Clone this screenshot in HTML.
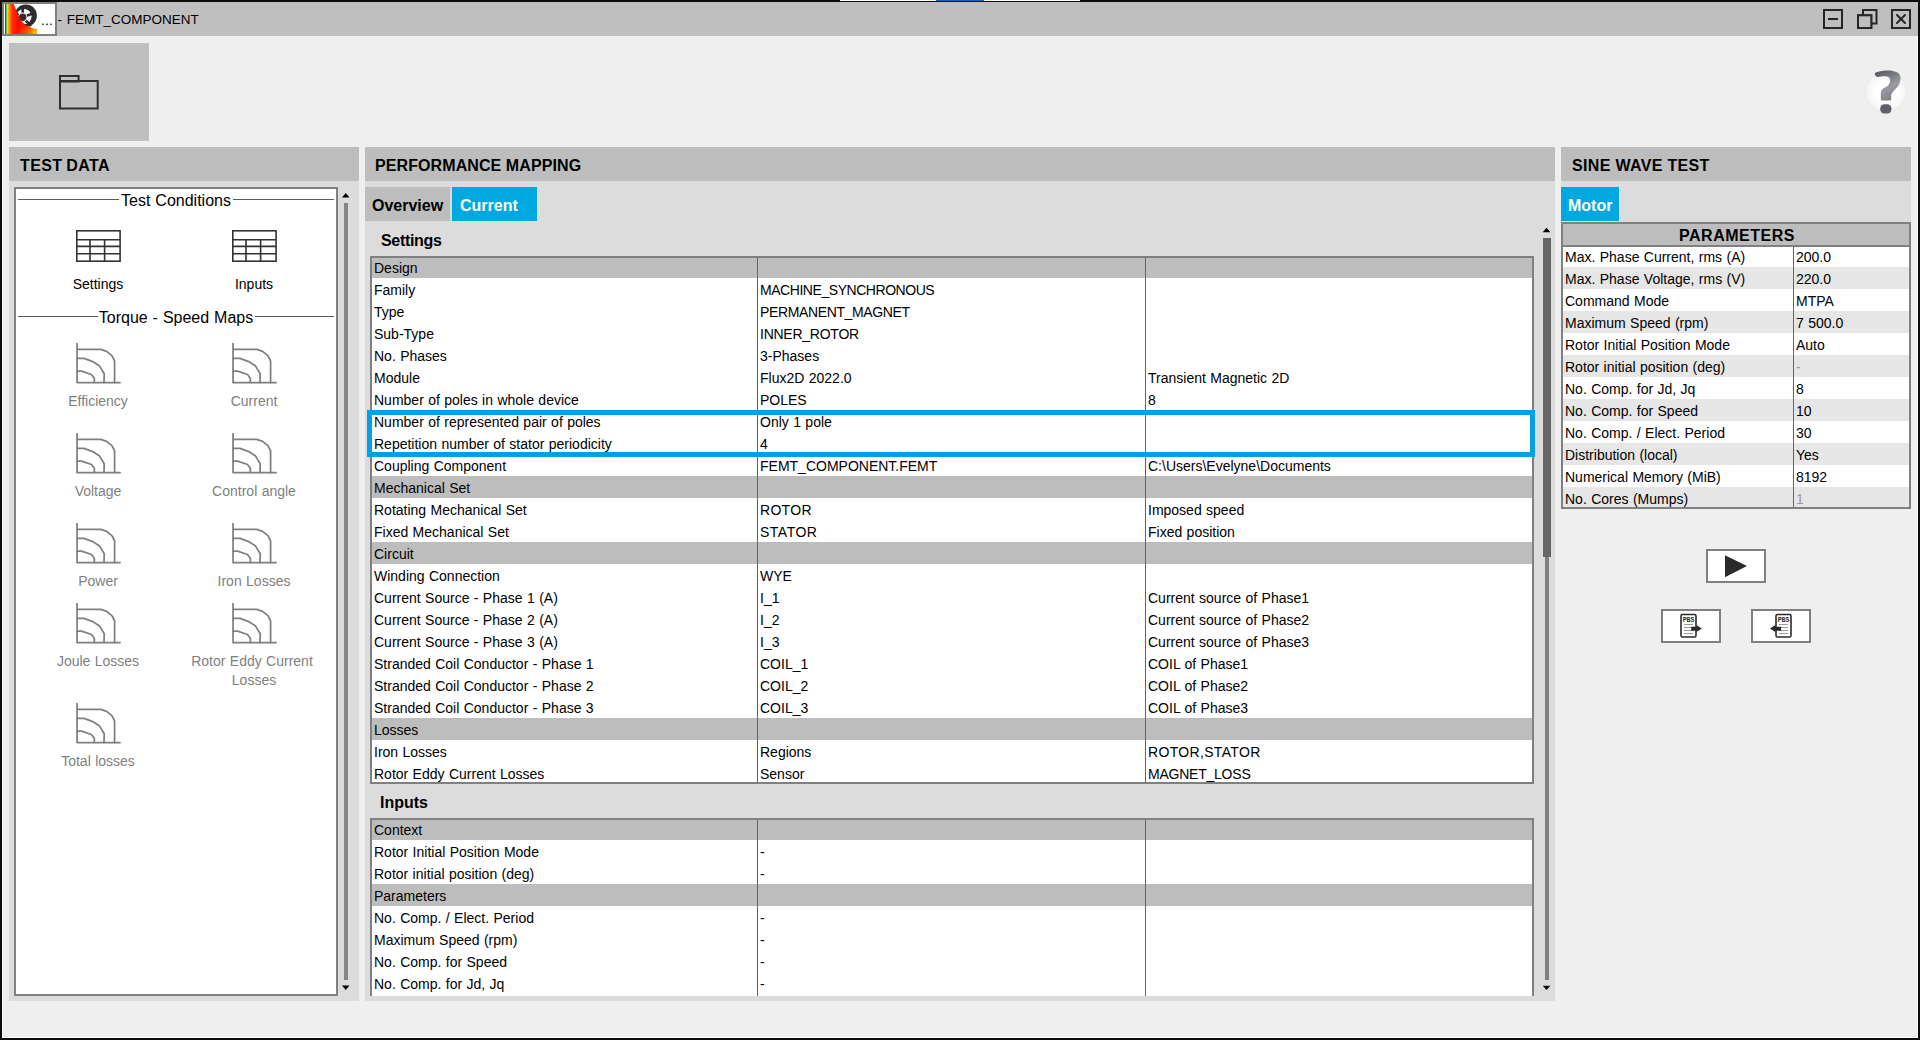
<!DOCTYPE html>
<html><head><meta charset="utf-8"><title>FEMT_COMPONENT</title>
<style>
*{box-sizing:border-box;margin:0;padding:0}
html,body{width:1920px;height:1040px;overflow:hidden}
body{position:relative;background:#efefef;font-family:"Liberation Sans",sans-serif;color:#000;font-size:14px}
.a{position:absolute}
.t{position:absolute;white-space:nowrap;line-height:22px;font-size:14px;word-spacing:0.5px}
.b{word-spacing:0}
.b{font-weight:bold}
.hdr{position:absolute;background:#bdbdbd;height:34px;top:147px}
.body{position:absolute;background:#dcdcdc}
.row{position:absolute;height:22px}
.g{background:#bdbdbd}
.alt{background:#e6e6e6}
.w{background:#fff}
.vl{position:absolute;width:1px;background:#646464}
</style></head>
<body>
<div class="a" style="left:0;top:0;width:1920px;height:2px;background:#0c0c0c"></div><div class="a" style="left:0;top:0;width:2px;height:1040px;background:#0c0c0c"></div><div class="a" style="left:1918px;top:0;width:2px;height:1040px;background:#0c0c0c"></div><div class="a" style="left:0;top:1038px;width:1920px;height:2px;background:#0c0c0c"></div><div class="a" style="left:2px;top:36px;width:1px;height:1002px;background:#fff"></div><div class="a" style="left:1917px;top:36px;width:1px;height:1002px;background:#fff"></div><div class="a" style="left:2px;top:1037px;width:1916px;height:1px;background:#fff"></div><div class="a" style="left:840px;top:0;width:240px;height:1px;background:#fff"></div><div class="a" style="left:936px;top:0;width:48px;height:1px;background:#0a64c8"></div><div class="a" style="left:2px;top:2px;width:1916px;height:34px;background:#bfbfbf"></div><div class="a" style="left:2px;top:2px;width:55px;height:34px;border:2px solid #7f7f7f;background:#fff;overflow:hidden">
<svg width="51" height="30" viewBox="0 0 51 30" style="position:absolute;left:0;top:0">
<defs>
<linearGradient id="fg" gradientUnits="userSpaceOnUse" x1="2" y1="0" x2="33" y2="0">
<stop offset="0" stop-color="#30d060"/><stop offset="0.04" stop-color="#e8f000"/><stop offset="0.1" stop-color="#ff9000"/><stop offset="0.2" stop-color="#ff3000"/><stop offset="0.4" stop-color="#ff0800"/><stop offset="0.75" stop-color="#ff2a00"/><stop offset="1" stop-color="#ff7000"/>
</linearGradient>
<linearGradient id="fb" gradientUnits="userSpaceOnUse" x1="16" y1="22" x2="30" y2="31">
<stop offset="0" stop-color="#ff8000" stop-opacity="0"/><stop offset="0.6" stop-color="#ff9000" stop-opacity="0.5"/><stop offset="1" stop-color="#d8d000" stop-opacity="0.9"/>
</linearGradient>
</defs>
<circle cx="21.8" cy="11.6" r="11.1" fill="#2d2d2d"/>
<circle cx="20" cy="12.6" r="7.6" fill="#fff"/>
<g stroke="#2d2d2d" stroke-width="2.6">
<line x1="18.7" y1="13.3" x2="18.7" y2="2"/><line x1="18.7" y1="13.3" x2="30" y2="9"/><line x1="18.7" y1="13.3" x2="27" y2="22"/><line x1="18.7" y1="13.3" x2="14" y2="22"/><line x1="18.7" y1="13.3" x2="9" y2="8"/>
</g>
<circle cx="18.7" cy="13.3" r="4.7" fill="#fff"/>
<circle cx="18.7" cy="13.3" r="3.7" fill="#2d2d2d"/>
<path d="M1,0 L9.8,0 C11.5,4 13.5,10.5 16,15 C18.5,19.5 23,22.5 29,24.5 L32.8,25.1 L32.8,30 L1,30 Z" fill="url(#fg)"/>
<path d="M14,20 C18,22.5 24,24.8 32.8,25.1 L32.8,30 L10,30 Z" fill="url(#fb)"/>
<rect x="1.1" y="0" width="1.1" height="30" fill="#0a58c8"/>
<rect x="37.9" y="19.6" width="1.9" height="1.5" fill="#6a5030"/><rect x="41.9" y="19.6" width="2.1" height="1.5" fill="#4a4a60"/><rect x="46" y="19.6" width="1.9" height="1.5" fill="#6a5030"/>
</svg></div><div class="t" style="left:57.5px;top:9px;font-size:13.5px;line-height:22px;word-spacing:1px">- FEMT_COMPONENT</div><svg class="a" style="left:1820px;top:6px" width="96" height="26" viewBox="0 0 96 26">
<g fill="none" stroke="#262626" stroke-width="2">
<rect x="4" y="4" width="18" height="18"/>
<rect x="43" y="4" width="13.5" height="13.5"/>
<rect x="38" y="9.3" width="13.3" height="12.7"/>
<rect x="72" y="4" width="18" height="18"/>
</g>
<rect x="38" y="9.3" width="13.3" height="12.7" fill="#bfbfbf" stroke="#262626" stroke-width="2"/>
<rect x="8" y="12" width="10" height="2" fill="#262626"/>
<g stroke="#262626" stroke-width="2" stroke-linecap="round"><line x1="77" y1="9" x2="85" y2="17"/><line x1="85" y1="9" x2="77" y2="17"/></g>
</svg><div class="a" style="left:9px;top:43px;width:140px;height:98px;background:#bfbfbf"></div>
<svg class="a" style="left:55px;top:70px" width="50" height="45" viewBox="0 0 50 45">
<g fill="none" stroke="#2f2f2f" stroke-width="2">
<rect x="5" y="6" width="18.6" height="5.5"/>
<rect x="5" y="11" width="37.7" height="27.5"/>
</g></svg><svg class="a" style="left:1840px;top:50px" width="80" height="80" viewBox="0 0 80 80">
<defs><radialGradient id="hg" cx="0.5" cy="0.5" r="0.5"><stop offset="0.5" stop-color="#fff"/><stop offset="0.85" stop-color="#f6f6f6"/><stop offset="1" stop-color="#e9e9e9"/></radialGradient>
<linearGradient id="qg" x1="0.3" y1="0" x2="0.7" y2="1"><stop offset="0" stop-color="#5b5e66"/><stop offset="0.55" stop-color="#9a9ba0"/><stop offset="1" stop-color="#7d7f85"/></linearGradient></defs>
<circle cx="46" cy="41.5" r="21.5" fill="url(#hg)"/>
<path d="M35.2,22.8 C40,20 52,19.3 57.5,22.5 C61.5,25 61.3,31 58.5,35.5 C56,39 52,41.5 51.2,45.5 L51.2,49.2 C51.2,50 50.8,50.6 50,50.6 L42,50.6 C41.2,50.6 40.8,50 40.8,49.2 L40.8,42.5 C40.8,40 42.5,38.6 45.5,37.2 C48.5,35.6 50.2,33.5 50.2,30.5 C50.2,27.5 47.5,26.3 44.5,26.3 C41.5,26.3 39,27.2 37.2,26.9 C35.3,26.5 34.2,24 35.2,22.8 Z" fill="url(#qg)"/>
<rect x="40.2" y="54.3" width="11.3" height="9.2" rx="4.2" fill="#5f6168"/>
</svg><div class="hdr" style="left:9px;width:350px"></div><div class="t b" style="left:20px;top:155px;font-size:16px;letter-spacing:0.4px;word-spacing:-1px">TEST DATA</div><div class="body" style="left:9px;top:181px;width:350px;height:820px"></div><div class="a" style="left:14px;top:187px;width:324px;height:809px;border:2px solid #808080;background:#fff"></div><svg class="a" style="left:340px;top:190px" width="12" height="803" viewBox="0 0 12 803"><path d="M2,7.5 L9.5,7.5 L5.75,3 Z" fill="#000"/><rect x="4" y="13" width="4" height="777" fill="#858585"/><path d="M2,795.5 L9.5,795.5 L5.75,800 Z" fill="#000"/></svg><div class="t" style="left:14px;top:190px;width:324px;text-align:center;font-size:16px">Test Conditions</div><div class="a" style="left:18px;top:199px;width:101px;height:1px;background:#5a5a5a"></div><div class="a" style="left:233px;top:199px;width:101px;height:1px;background:#5a5a5a"></div><div class="t" style="left:14px;top:307px;width:324px;text-align:center;font-size:16px">Torque - Speed Maps</div><div class="a" style="left:18px;top:316px;width:80px;height:1px;background:#5a5a5a"></div><div class="a" style="left:255px;top:316px;width:79px;height:1px;background:#5a5a5a"></div><svg class="a" style="left:76px;top:230px" width="46" height="33" viewBox="0 0 46 33">
<g fill="none" stroke="#333" stroke-width="1.6">
<rect x="0.8" y="0.8" width="43.3" height="30.4"/>
<line x1="0.8" y1="9.7" x2="44.1" y2="9.7"/><line x1="0.8" y1="16.4" x2="44.1" y2="16.4"/><line x1="0.8" y1="23.7" x2="44.1" y2="23.7"/>
<line x1="14" y1="9.7" x2="14" y2="31.2"/><line x1="28.6" y1="9.7" x2="28.6" y2="31.2"/>
</g></svg><svg class="a" style="left:232px;top:230px" width="46" height="33" viewBox="0 0 46 33">
<g fill="none" stroke="#333" stroke-width="1.6">
<rect x="0.8" y="0.8" width="43.3" height="30.4"/>
<line x1="0.8" y1="9.7" x2="44.1" y2="9.7"/><line x1="0.8" y1="16.4" x2="44.1" y2="16.4"/><line x1="0.8" y1="23.7" x2="44.1" y2="23.7"/>
<line x1="14" y1="9.7" x2="14" y2="31.2"/><line x1="28.6" y1="9.7" x2="28.6" y2="31.2"/>
</g></svg><div class="t" style="left:18px;top:273px;width:160px;text-align:center">Settings</div><div class="t" style="left:174px;top:273px;width:160px;text-align:center">Inputs</div><svg class="a" style="left:76px;top:343px" width="46" height="42" viewBox="0 0 46 42">
<g fill="none" stroke="#808080" stroke-width="1.75" stroke-linejoin="round" stroke-linecap="round">
<path d="M1.05,0.5 L1.05,39.5 L44.1,39.5"/>
<path d="M1.05,6.3 L24.8,6.3 L30.6,8.3 L35.9,12.7 L38.6,18 L38.6,39.5"/>
<path d="M1.05,15.4 L8,15.4 L16.7,18.6 L23.6,23.1 L28.2,30.8 L28,39.5"/>
<path d="M1.05,28.2 L5.6,28.2 L15.5,31.5 L18.4,35.6 L18.3,39.5"/>
</g></svg><div class="t" style="left:18px;top:390px;width:160px;text-align:center;color:#7f7f7f">Efficiency</div><svg class="a" style="left:232px;top:343px" width="46" height="42" viewBox="0 0 46 42">
<g fill="none" stroke="#808080" stroke-width="1.75" stroke-linejoin="round" stroke-linecap="round">
<path d="M1.05,0.5 L1.05,39.5 L44.1,39.5"/>
<path d="M1.05,6.3 L24.8,6.3 L30.6,8.3 L35.9,12.7 L38.6,18 L38.6,39.5"/>
<path d="M1.05,15.4 L8,15.4 L16.7,18.6 L23.6,23.1 L28.2,30.8 L28,39.5"/>
<path d="M1.05,28.2 L5.6,28.2 L15.5,31.5 L18.4,35.6 L18.3,39.5"/>
</g></svg><div class="t" style="left:174px;top:390px;width:160px;text-align:center;color:#7f7f7f">Current</div><svg class="a" style="left:76px;top:433px" width="46" height="42" viewBox="0 0 46 42">
<g fill="none" stroke="#808080" stroke-width="1.75" stroke-linejoin="round" stroke-linecap="round">
<path d="M1.05,0.5 L1.05,39.5 L44.1,39.5"/>
<path d="M1.05,6.3 L24.8,6.3 L30.6,8.3 L35.9,12.7 L38.6,18 L38.6,39.5"/>
<path d="M1.05,15.4 L8,15.4 L16.7,18.6 L23.6,23.1 L28.2,30.8 L28,39.5"/>
<path d="M1.05,28.2 L5.6,28.2 L15.5,31.5 L18.4,35.6 L18.3,39.5"/>
</g></svg><div class="t" style="left:18px;top:480px;width:160px;text-align:center;color:#7f7f7f">Voltage</div><svg class="a" style="left:232px;top:433px" width="46" height="42" viewBox="0 0 46 42">
<g fill="none" stroke="#808080" stroke-width="1.75" stroke-linejoin="round" stroke-linecap="round">
<path d="M1.05,0.5 L1.05,39.5 L44.1,39.5"/>
<path d="M1.05,6.3 L24.8,6.3 L30.6,8.3 L35.9,12.7 L38.6,18 L38.6,39.5"/>
<path d="M1.05,15.4 L8,15.4 L16.7,18.6 L23.6,23.1 L28.2,30.8 L28,39.5"/>
<path d="M1.05,28.2 L5.6,28.2 L15.5,31.5 L18.4,35.6 L18.3,39.5"/>
</g></svg><div class="t" style="left:174px;top:480px;width:160px;text-align:center;color:#7f7f7f">Control angle</div><svg class="a" style="left:76px;top:523px" width="46" height="42" viewBox="0 0 46 42">
<g fill="none" stroke="#808080" stroke-width="1.75" stroke-linejoin="round" stroke-linecap="round">
<path d="M1.05,0.5 L1.05,39.5 L44.1,39.5"/>
<path d="M1.05,6.3 L24.8,6.3 L30.6,8.3 L35.9,12.7 L38.6,18 L38.6,39.5"/>
<path d="M1.05,15.4 L8,15.4 L16.7,18.6 L23.6,23.1 L28.2,30.8 L28,39.5"/>
<path d="M1.05,28.2 L5.6,28.2 L15.5,31.5 L18.4,35.6 L18.3,39.5"/>
</g></svg><div class="t" style="left:18px;top:570px;width:160px;text-align:center;color:#7f7f7f">Power</div><svg class="a" style="left:232px;top:523px" width="46" height="42" viewBox="0 0 46 42">
<g fill="none" stroke="#808080" stroke-width="1.75" stroke-linejoin="round" stroke-linecap="round">
<path d="M1.05,0.5 L1.05,39.5 L44.1,39.5"/>
<path d="M1.05,6.3 L24.8,6.3 L30.6,8.3 L35.9,12.7 L38.6,18 L38.6,39.5"/>
<path d="M1.05,15.4 L8,15.4 L16.7,18.6 L23.6,23.1 L28.2,30.8 L28,39.5"/>
<path d="M1.05,28.2 L5.6,28.2 L15.5,31.5 L18.4,35.6 L18.3,39.5"/>
</g></svg><div class="t" style="left:174px;top:570px;width:160px;text-align:center;color:#7f7f7f">Iron Losses</div><svg class="a" style="left:76px;top:603px" width="46" height="42" viewBox="0 0 46 42">
<g fill="none" stroke="#808080" stroke-width="1.75" stroke-linejoin="round" stroke-linecap="round">
<path d="M1.05,0.5 L1.05,39.5 L44.1,39.5"/>
<path d="M1.05,6.3 L24.8,6.3 L30.6,8.3 L35.9,12.7 L38.6,18 L38.6,39.5"/>
<path d="M1.05,15.4 L8,15.4 L16.7,18.6 L23.6,23.1 L28.2,30.8 L28,39.5"/>
<path d="M1.05,28.2 L5.6,28.2 L15.5,31.5 L18.4,35.6 L18.3,39.5"/>
</g></svg><div class="t" style="left:18px;top:650px;width:160px;text-align:center;color:#7f7f7f">Joule Losses</div><svg class="a" style="left:232px;top:603px" width="46" height="42" viewBox="0 0 46 42">
<g fill="none" stroke="#808080" stroke-width="1.75" stroke-linejoin="round" stroke-linecap="round">
<path d="M1.05,0.5 L1.05,39.5 L44.1,39.5"/>
<path d="M1.05,6.3 L24.8,6.3 L30.6,8.3 L35.9,12.7 L38.6,18 L38.6,39.5"/>
<path d="M1.05,15.4 L8,15.4 L16.7,18.6 L23.6,23.1 L28.2,30.8 L28,39.5"/>
<path d="M1.05,28.2 L5.6,28.2 L15.5,31.5 L18.4,35.6 L18.3,39.5"/>
</g></svg><div class="t" style="left:172px;top:650px;width:160px;text-align:center;color:#7f7f7f">Rotor Eddy Current</div><div class="t" style="left:174px;top:669px;width:160px;text-align:center;color:#7f7f7f">Losses</div><svg class="a" style="left:76px;top:703px" width="46" height="42" viewBox="0 0 46 42">
<g fill="none" stroke="#808080" stroke-width="1.75" stroke-linejoin="round" stroke-linecap="round">
<path d="M1.05,0.5 L1.05,39.5 L44.1,39.5"/>
<path d="M1.05,6.3 L24.8,6.3 L30.6,8.3 L35.9,12.7 L38.6,18 L38.6,39.5"/>
<path d="M1.05,15.4 L8,15.4 L16.7,18.6 L23.6,23.1 L28.2,30.8 L28,39.5"/>
<path d="M1.05,28.2 L5.6,28.2 L15.5,31.5 L18.4,35.6 L18.3,39.5"/>
</g></svg><div class="t" style="left:18px;top:750px;width:160px;text-align:center;color:#7f7f7f">Total losses</div><div class="hdr" style="left:365px;width:1190px"></div><div class="t b" style="left:375px;top:155px;font-size:16px;letter-spacing:0.09px">PERFORMANCE MAPPING</div><div class="body" style="left:365px;top:181px;width:1190px;height:820px"></div><div class="a" style="left:365px;top:187px;width:85px;height:34px;background:#bdbdbd"></div><div class="t b" style="left:372px;top:195px;font-size:16px">Overview</div><div class="a" style="left:452px;top:187px;width:85px;height:34px;background:#00a8e0"></div><div class="t b" style="left:460px;top:195px;font-size:16px;color:#fff">Current</div><div class="t b" style="left:381px;top:230px;font-size:16px;letter-spacing:-0.33px">Settings</div><div class="t b" style="left:380px;top:792px;font-size:16px">Inputs</div><div class="a" style="left:370px;top:256px;width:1164px;height:528px;background:#fff;overflow:hidden"><div class="row g" style="left:0;top:0px;width:1164px"></div><div class="t" style="left:4px;top:1px">Design</div><div class="t" style="left:4px;top:23px">Family</div><div class="t" style="left:390px;top:23px;letter-spacing:-0.45px">MACHINE_SYNCHRONOUS</div><div class="t" style="left:4px;top:45px">Type</div><div class="t" style="left:390px;top:45px;letter-spacing:-0.37px">PERMANENT_MAGNET</div><div class="t" style="left:4px;top:67px">Sub-Type</div><div class="t" style="left:390px;top:67px;letter-spacing:-0.25px">INNER_ROTOR</div><div class="t" style="left:4px;top:89px">No. Phases</div><div class="t" style="left:390px;top:89px">3-Phases</div><div class="t" style="left:4px;top:111px">Module</div><div class="t" style="left:390px;top:111px">Flux2D 2022.0</div><div class="t" style="left:778px;top:111px">Transient Magnetic 2D</div><div class="t" style="left:4px;top:133px">Number of poles in whole device</div><div class="t" style="left:390px;top:133px">POLES</div><div class="t" style="left:778px;top:133px">8</div><div class="t" style="left:4px;top:155px">Number of represented pair of poles</div><div class="t" style="left:390px;top:155px">Only 1 pole</div><div class="t" style="left:4px;top:177px">Repetition number of stator periodicity</div><div class="t" style="left:390px;top:177px">4</div><div class="t" style="left:4px;top:199px">Coupling Component</div><div class="t" style="left:390px;top:199px">FEMT_COMPONENT.FEMT</div><div class="t" style="left:778px;top:199px">C:\Users\Evelyne\Documents</div><div class="row g" style="left:0;top:220px;width:1164px"></div><div class="t" style="left:4px;top:221px">Mechanical Set</div><div class="t" style="left:4px;top:243px">Rotating Mechanical Set</div><div class="t" style="left:390px;top:243px;letter-spacing:0.3px">ROTOR</div><div class="t" style="left:778px;top:243px">Imposed speed</div><div class="t" style="left:4px;top:265px">Fixed Mechanical Set</div><div class="t" style="left:390px;top:265px;letter-spacing:0.5px">STATOR</div><div class="t" style="left:778px;top:265px">Fixed position</div><div class="row g" style="left:0;top:286px;width:1164px"></div><div class="t" style="left:4px;top:287px">Circuit</div><div class="t" style="left:4px;top:309px">Winding Connection</div><div class="t" style="left:390px;top:309px">WYE</div><div class="t" style="left:4px;top:331px">Current Source - Phase 1 (A)</div><div class="t" style="left:390px;top:331px">I_1</div><div class="t" style="left:778px;top:331px">Current source of Phase1</div><div class="t" style="left:4px;top:353px">Current Source - Phase 2 (A)</div><div class="t" style="left:390px;top:353px">I_2</div><div class="t" style="left:778px;top:353px">Current source of Phase2</div><div class="t" style="left:4px;top:375px">Current Source - Phase 3 (A)</div><div class="t" style="left:390px;top:375px">I_3</div><div class="t" style="left:778px;top:375px">Current source of Phase3</div><div class="t" style="left:4px;top:397px">Stranded Coil Conductor - Phase 1</div><div class="t" style="left:390px;top:397px">COIL_1</div><div class="t" style="left:778px;top:397px">COIL of Phase1</div><div class="t" style="left:4px;top:419px">Stranded Coil Conductor - Phase 2</div><div class="t" style="left:390px;top:419px">COIL_2</div><div class="t" style="left:778px;top:419px">COIL of Phase2</div><div class="t" style="left:4px;top:441px">Stranded Coil Conductor - Phase 3</div><div class="t" style="left:390px;top:441px">COIL_3</div><div class="t" style="left:778px;top:441px">COIL of Phase3</div><div class="row g" style="left:0;top:462px;width:1164px"></div><div class="t" style="left:4px;top:463px">Losses</div><div class="t" style="left:4px;top:485px">Iron Losses</div><div class="t" style="left:390px;top:485px">Regions</div><div class="t" style="left:778px;top:485px;letter-spacing:0.33px">ROTOR,STATOR</div><div class="t" style="left:4px;top:507px">Rotor Eddy Current Losses</div><div class="t" style="left:390px;top:507px">Sensor</div><div class="t" style="left:778px;top:507px;letter-spacing:-0.23px">MAGNET_LOSS</div><div class="vl" style="left:387px;top:0;height:528px"></div><div class="vl" style="left:775px;top:0;height:528px"></div><div class="a" style="left:0;top:0;width:1164px;height:2px;background:#808080"></div><div class="a" style="left:0;top:0;width:2px;height:528px;background:#808080"></div><div class="a" style="left:1162px;top:0;width:2px;height:528px;background:#808080"></div><div class="a" style="left:0;top:526px;width:1164px;height:2px;background:#808080"></div></div><div class="a" style="left:370px;top:818px;width:1164px;height:178px;background:#fff;overflow:hidden"><div class="row g" style="left:0;top:0px;width:1164px"></div><div class="t" style="left:4px;top:1px">Context</div><div class="t" style="left:4px;top:23px">Rotor Initial Position Mode</div><div class="t" style="left:390px;top:23px">-</div><div class="t" style="left:4px;top:45px">Rotor initial position (deg)</div><div class="t" style="left:390px;top:45px">-</div><div class="row g" style="left:0;top:66px;width:1164px"></div><div class="t" style="left:4px;top:67px">Parameters</div><div class="t" style="left:4px;top:89px">No. Comp. / Elect. Period</div><div class="t" style="left:390px;top:89px">-</div><div class="t" style="left:4px;top:111px">Maximum Speed (rpm)</div><div class="t" style="left:390px;top:111px">-</div><div class="t" style="left:4px;top:133px">No. Comp. for Speed</div><div class="t" style="left:390px;top:133px">-</div><div class="t" style="left:4px;top:155px">No. Comp. for Jd, Jq</div><div class="t" style="left:390px;top:155px">-</div><div class="vl" style="left:387px;top:0;height:178px"></div><div class="vl" style="left:775px;top:0;height:178px"></div><div class="a" style="left:0;top:0;width:1164px;height:2px;background:#808080"></div><div class="a" style="left:0;top:0;width:2px;height:178px;background:#808080"></div><div class="a" style="left:1162px;top:0;width:2px;height:178px;background:#808080"></div></div><div class="a" style="left:367px;top:410px;width:1168px;height:47px;border:5px solid #00a0e6"></div><svg class="a" style="left:1540px;top:224px" width="14" height="770" viewBox="0 0 14 770"><path d="M2.7,8.3 L10.3,8.3 L6.5,3.7 Z" fill="#000"/><rect x="5" y="14" width="4" height="742" fill="#808080"/><rect x="3" y="14" width="8" height="319" fill="#666"/><path d="M2.7,761.8 L10.3,761.8 L6.5,766 Z" fill="#000"/></svg><div class="hdr" style="left:1561px;width:350px"></div><div class="t b" style="left:1572px;top:155px;font-size:16px;letter-spacing:0.33px">SINE WAVE TEST</div><div class="body" style="left:1561px;top:181px;width:350px;height:41px"></div><div class="a" style="left:1561px;top:187px;width:58px;height:34px;background:#00a8e0"></div><div class="t b" style="left:1568px;top:195px;font-size:16px;color:#fff">Motor</div><div class="a" style="left:1561px;top:222px;width:350px;height:287px;background:#fff;overflow:hidden"><div class="a" style="left:0;top:0;width:350px;height:23px;background:#bdbdbd"></div><div class="t b" style="left:1px;top:3px;width:350px;text-align:center;font-size:16px;letter-spacing:0.5px">PARAMETERS</div><div class="t" style="left:4px;top:24px">Max. Phase Current, rms (A)</div><div class="t" style="left:235px;top:24px;color:#000">200.0</div><div class="row alt" style="left:0;top:45px;width:350px"></div><div class="t" style="left:4px;top:46px">Max. Phase Voltage, rms (V)</div><div class="t" style="left:235px;top:46px;color:#000">220.0</div><div class="t" style="left:4px;top:68px">Command Mode</div><div class="t" style="left:235px;top:68px;color:#000">MTPA</div><div class="row alt" style="left:0;top:89px;width:350px"></div><div class="t" style="left:4px;top:90px">Maximum Speed (rpm)</div><div class="t" style="left:235px;top:90px;color:#000">7 500.0</div><div class="t" style="left:4px;top:112px">Rotor Initial Position Mode</div><div class="t" style="left:235px;top:112px;color:#000">Auto</div><div class="row alt" style="left:0;top:133px;width:350px"></div><div class="t" style="left:4px;top:134px">Rotor initial position (deg)</div><div class="t" style="left:235px;top:134px;color:#9a9a9a">-</div><div class="t" style="left:4px;top:156px">No. Comp. for Jd, Jq</div><div class="t" style="left:235px;top:156px;color:#000">8</div><div class="row alt" style="left:0;top:177px;width:350px"></div><div class="t" style="left:4px;top:178px">No. Comp. for Speed</div><div class="t" style="left:235px;top:178px;color:#000">10</div><div class="t" style="left:4px;top:200px">No. Comp. / Elect. Period</div><div class="t" style="left:235px;top:200px;color:#000">30</div><div class="row alt" style="left:0;top:221px;width:350px"></div><div class="t" style="left:4px;top:222px">Distribution (local)</div><div class="t" style="left:235px;top:222px;color:#000">Yes</div><div class="t" style="left:4px;top:244px">Numerical Memory (MiB)</div><div class="t" style="left:235px;top:244px;color:#000">8192</div><div class="row alt" style="left:0;top:265px;width:350px"></div><div class="t" style="left:4px;top:266px">No. Cores (Mumps)</div><div class="t" style="left:235px;top:266px;color:#9a9a9a">1</div><div class="vl" style="left:232px;top:25px;height:262px"></div><div class="a" style="left:0;top:0;width:350px;height:287px;border:2px solid #808080"></div><div class="a" style="left:0;top:23px;width:350px;height:2px;background:#808080"></div></div><div class="a" style="left:1706px;top:549px;width:60px;height:34px;border:2px solid #808080;background:#fff"></div>
<svg class="a" style="left:1706px;top:549px" width="60" height="34" viewBox="0 0 60 34"><path d="M19,6.3 L41,17 L19,28.2 Z" fill="#2b2b2b"/></svg><div class="a" style="left:1661px;top:609px;width:60px;height:34px;border:2px solid #808080;background:#fff"></div>
<svg class="a" style="left:1661px;top:609px" width="60" height="34" viewBox="0 0 60 34">
<g transform="translate(19,0)">
<rect x="1" y="5.5" width="15" height="22.5" rx="1.5" fill="#fff" stroke="#2b2b2b" stroke-width="1.6"/>
<text x="8.5" y="13.3" font-family="Liberation Mono" font-size="6.5" font-weight="bold" text-anchor="middle" fill="#2b2b2b">PBS</text>
<g stroke="#9a9a9a" stroke-width="1"><line x1="4" y1="15.5" x2="13" y2="15.5"/><line x1="4" y1="18.5" x2="13" y2="18.5"/><line x1="4" y1="21.5" x2="13" y2="21.5"/><line x1="4" y1="24.5" x2="13" y2="24.5"/></g>
</g>
<path d="M30.2,17.7 L35.5,17.7 L35.5,16.1 L40.8,19.6 L35.5,23 L35.5,21.7 L30.2,21.7 Z" fill="#2b2b2b"/>
</svg><div class="a" style="left:1751px;top:609px;width:60px;height:34px;border:2px solid #808080;background:#fff"></div>
<svg class="a" style="left:1751px;top:609px" width="60" height="34" viewBox="0 0 60 34">
<g transform="translate(24,0)">
<rect x="1" y="5.5" width="15" height="22.5" rx="1.5" fill="#fff" stroke="#2b2b2b" stroke-width="1.6"/>
<text x="8.5" y="13.3" font-family="Liberation Mono" font-size="6.5" font-weight="bold" text-anchor="middle" fill="#2b2b2b">PBS</text>
<g stroke="#9a9a9a" stroke-width="1"><line x1="4" y1="15.5" x2="13" y2="15.5"/><line x1="4" y1="18.5" x2="13" y2="18.5"/><line x1="4" y1="21.5" x2="13" y2="21.5"/><line x1="4" y1="24.5" x2="13" y2="24.5"/></g>
</g>
<path d="M30.1,17.7 L24.3,17.7 L24.3,16.1 L19,19.6 L24.3,23 L24.3,21.7 L30.1,21.7 Z" fill="#2b2b2b"/>
</svg>
</body></html>
